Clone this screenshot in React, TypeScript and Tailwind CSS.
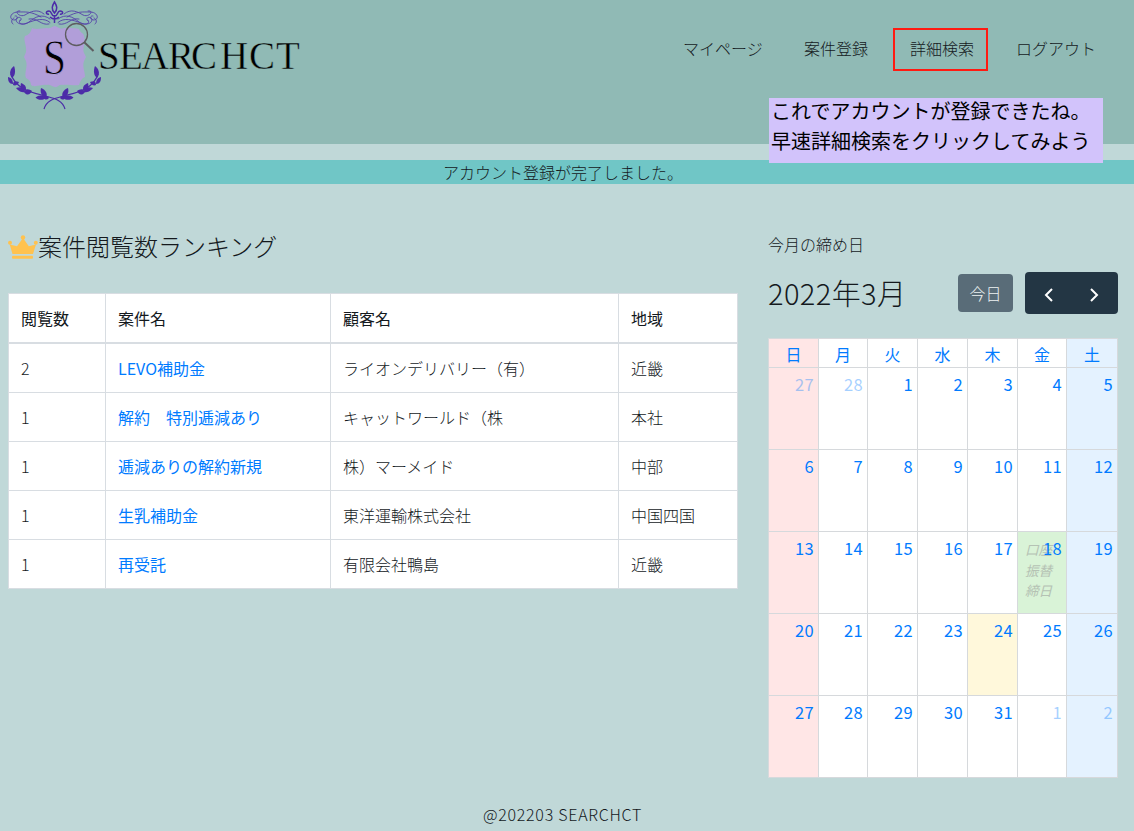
import React from "react";

const ranking = [
  ["2", "LEVO補助金", "ライオンデリバリー（有）", "近畿"],
  ["1", "解約　特別逓減あり", "キャットワールド（株", "本社"],
  ["1", "逓減ありの解約新規", "株）マーメイド", "中部"],
  ["1", "生乳補助金", "東洋運輸株式会社", "中国四国"],
  ["1", "再受託", "有限会社鴨島", "近畿"],
];

const weekdays = ["日", "月", "火", "水", "木", "金", "土"];

const weeks = [
  [27, 28, 1, 2, 3, 4, 5],
  [6, 7, 8, 9, 10, 11, 12],
  [13, 14, 15, 16, 17, 18, 19],
  [20, 21, 22, 23, 24, 25, 26],
  [27, 28, 29, 30, 31, 1, 2],
];

const CALENDAR_GRID = "grid grid-cols-[50px_49px_50px_50px_50px_49px_51px]";

function columnColor(col: number) {
  if (col === 0) return "bg-[#ffe6e6]";
  if (col === 6) return "bg-[#e4f2ff]";
  return "bg-white";
}

function Scroll() {
  return (
    <g fill="none" stroke="#4c2ca8" strokeWidth="0.9" strokeLinecap="round" opacity="0.85">
      <path d="M50 22.5C44 17 35 20 27 23C20 26 14 22 17 18C20 16 23 19 20 21" />
      <path d="M50 19C42 13 35 17 29 22C24 26 17 24 20 20" />
      <path d="M44 14C37 8 30 12 25 15C19 18 13 10 20 11" />
      <path d="M41 17C31 11 25 12 18 12C10 12 8 20 15 20C18 19 18 15 15 16" />
      <path d="M49 24C41 26 37 17 29 19" />
      <path d="M13 24C11 23 11 19 14 18" />
    </g>
  );
}

function Laurel() {
  return (
    <g fill="#4c2ca8">
      <path
        d="M65 109C62 98 50 98 42 95C28 92 15 87 11 74"
        fill="none"
        stroke="#4c2ca8"
        strokeWidth="1.2"
      />
      <path d="M12 78C8 73 11 68 14 66C16 71 15 76 12 78Z" />
      <path d="M13 84C9 84 8 81 8 77C12 78 13 81 13 84Z" />
      <path d="M13 85C13 80 16 81 19 82C18 85 15 86 13 85Z" />
      <path d="M25 92C20 93 18 90 16 88C21 86 25 88 25 92Z" />
      <path d="M25 91C21 89 20 86 21 83C26 85 27 88 25 91Z" />
      <path d="M24 92C26 88 29 89 32 91C30 95 27 96 24 92Z" />
      <path d="M46 98C42 101 38 100 35.500 97.500C40 94 45 95 46 98Z" />
      <path d="M46 98C41 96 40 92 41 88C46 90 48 94 46 98Z" />
      <path d="M44 98C46 95 48 96 49 98C47 100 45 100 44 98Z" />
    </g>
  );
}

function Logo() {
  return (
    <svg width="310" height="112" viewBox="0 0 310 112" className="block">
      <path
        d="M32 28C36 30 43 28 47 28C51 29 53 26 55 26C58 27 60 30 64 28C69 28 77 28 79 29C80 33 84 33 84 36C86 42 82 49 84 53L86 57L84 61C82 66 85 72 85 77C82 78 80 81 79 85C74 86 67 84 63 85C59 84 57 88 55 87C52 87 50 84 47 85C41 84 35 88 31 85C31 81 28 79 26 78C24 73 28 67 26 61L24 57L26 52C27 46 23 40 25 36C29 35 31 32 32 28Z"
        fill="#b19ed9"
      />
      <Scroll />
      <g transform="translate(108 0)">
        <g transform="scale(-1 1)">
          <Scroll />
        </g>
      </g>
      <g fill="none" stroke="#4c2ca8" strokeWidth="1.5">
        <path d="M54.5 2C52 6 51 9 54.5 13C58 9 57 6 54.5 2Z" />
        <path d="M54 16C51 16 52 11 49 11C45 11 46 15 49 14M55 16C58 16 57 11 60 11C64 11 63 15 60 14M50 17Q54.5 21 59 17M54.5 15V23" />
      </g>
      <Laurel />
      <g transform="translate(109 0)">
        <g transform="scale(-1 1)">
          <Laurel />
        </g>
      </g>
      <g fill="none" stroke="#5e5c60">
        <circle cx="76.5" cy="34.5" r="11" strokeWidth="1.3" />
        <path d="M84 42L93.500 51" strokeWidth="2" />
      </g>
      <g fill="#000" className="font-['Liberation_Serif',serif]">
        <text x="43" y="74" fontSize="51" stroke="#b19ed9" strokeWidth="0.8" textLength="23" lengthAdjust="spacingAndGlyphs">
          S
        </text>
        <text x="98 119 141 168 191 220 249 276" y="69" fontSize="39" stroke="#90bab5" strokeWidth="0.5">
          SEARCHCT
        </text>
      </g>
    </svg>
  );
}

function Crown() {
  return (
    <svg width="30" height="24" viewBox="0 0 30 24" className="block shrink-0" fill="#ffc24f">
      <path d="M4.500 19L1.700 9.500L9 11.300L15 3L20.800 11.300L28 9.500L25 19Z" />
      <circle cx="2" cy="7.700" r="2" />
      <circle cx="15" cy="2.500" r="2.200" />
      <circle cx="27.800" cy="7.700" r="2" />
      <rect x="4" y="20.700" width="21" height="3" rx="1" />
    </svg>
  );
}

function Header() {
  return (
    <header className="flex h-36 items-start justify-between bg-[#90bab5]">
      <Logo />
      <nav className="mr-[30px] mt-7 flex h-[43px] items-center leading-6">
        <a className="w-[80px] pb-1">マイページ</a>
        <a className="ml-[41px] w-16 pb-1">案件登録</a>
        <a className="ml-[25px] flex h-[43px] w-[95px] items-center justify-center border-2 border-[#ff1b12] pb-1 pl-[3px]">
          詳細検索
        </a>
        <a className="ml-7 w-[88px] pb-1">ログアウト</a>
      </nav>
    </header>
  );
}

function Ranking() {
  return (
    <section className="w-[730px]">
      <h2 className="flex h-9 items-center text-2xl leading-9">
        <Crown />
        <span className="pb-0.5">案件閲覧数ランキング</span>
      </h2>
      <div className="mt-[28px] border-b border-r border-[#d8dde2] bg-white">
        <div className="grid h-[51px] grid-cols-[97px_225px_288px_1fr] border-b-2 border-[#d8dde2] font-normal">
          {["閲覧数", "案件名", "顧客名", "地域"].map((label) => (
            <div key={label} className="flex items-center border-l border-t border-[#d8dde2] px-3">
              {label}
            </div>
          ))}
        </div>
        {ranking.map((row, r) => (
          <div key={r} className={`grid grid-cols-[97px_225px_288px_1fr] ${r === 0 ? "h-12" : "h-[49px]"}`}>
            {row.map((value, c) => (
              <div
                key={c}
                className={`flex items-center border-l border-[#d8dde2] px-3 ${r > 0 ? "border-t" : ""} ${c === 1 ? "font-normal text-[#007bff]" : ""}`}
              >
                {value}
              </div>
            ))}
          </div>
        ))}
      </div>
    </section>
  );
}

function Calendar() {
  return (
    <section className="w-[350px]">
      <p className="mt-[3px] h-6 leading-6">今月の締め日</p>
      <div className="mt-4 flex h-[42px] items-center">
        <h2 className="text-[29px] tracking-[0.4px]">2022年3月</h2>
        <button className="ml-auto h-[38px] w-[55px] rounded bg-[#596c78] text-[#eef2f3]">今日</button>
        <div className="ml-3 flex h-[42px] w-[93px] items-center justify-around rounded bg-[#233644] px-px">
          {["M10 2L4 8L10 14", "M4 2L10 8L4 14"].map((d) => (
            <button key={d} className="pt-1">
              <svg width="14" height="16" viewBox="0 0 14 16" fill="none" stroke="#fff" strokeWidth="2">
                <path d={d} />
              </svg>
            </button>
          ))}
        </div>
      </div>
      <div className="mt-6 border-b border-r border-[#d6d9dc] font-normal text-[#007bff]">
        <div className={CALENDAR_GRID}>
          {weekdays.map((day, c) => (
            <div
              key={day}
              className={`flex h-[29px] items-center justify-center border-l border-t border-[#d6d9dc] pt-0.5 ${columnColor(c)}`}
            >
              {day}
            </div>
          ))}
        </div>
        {weeks.map((week, r) => (
          <div key={r} className={CALENDAR_GRID}>
            {week.map((day, c) => {
              const outside = (r === 0 && c < 2) || (r === 4 && c > 4);
              const event = r === 2 && c === 5;
              const today = r === 3 && c === 4;
              const background = event ? "bg-[#d9f3d7]" : today ? "bg-[#fff8db]" : columnColor(c);
              return (
                <div
                  key={c}
                  className={`relative h-[82px] border-l border-t border-[#d6d9dc] pr-1 pt-1 text-right leading-6 ${background}`}
                >
                  {event && (
                    <span className="absolute left-[7px] top-[7px] w-7 text-left text-[13.6px] italic leading-[20.500px] text-[#b5c2b4]">
                      口座振替締日
                    </span>
                  )}
                  <span className={`relative text-[16.500px] tracking-[0.4px] ${outside ? "opacity-35" : ""}`}>
                    {day}
                  </span>
                </div>
              );
            })}
          </div>
        ))}
      </div>
    </section>
  );
}

export default function App() {
  return (
    <div className="relative flex h-[831px] w-[1134px] flex-col overflow-hidden bg-[#c0d8d8] font-['Noto_Sans_CJK_JP',sans-serif] text-base font-light text-[#14191d]">
      <Header />
      <div className="mt-4 h-6 bg-[#70c6c6] pr-[8px] text-center leading-6">アカウント登録が完了しました。</div>
      <main className="mt-[45px] flex items-start justify-between pl-2 pr-4">
        <Ranking />
        <Calendar />
      </main>
      <footer className="mt-[24px] pr-[9px] text-center leading-6 tracking-[0.73px]">@202203 SEARCHCT</footer>
      <aside className="absolute left-[769px] top-[98px] h-[65px] w-[334px] bg-[#d2c3fb] pl-0.5 text-[20px] font-normal leading-[30px] text-black">
        <div className="-mt-[2px]">これでアカウントが登録できたね。</div>
        <div>早速詳細検索をクリックしてみよう</div>
      </aside>
    </div>
  );
}
